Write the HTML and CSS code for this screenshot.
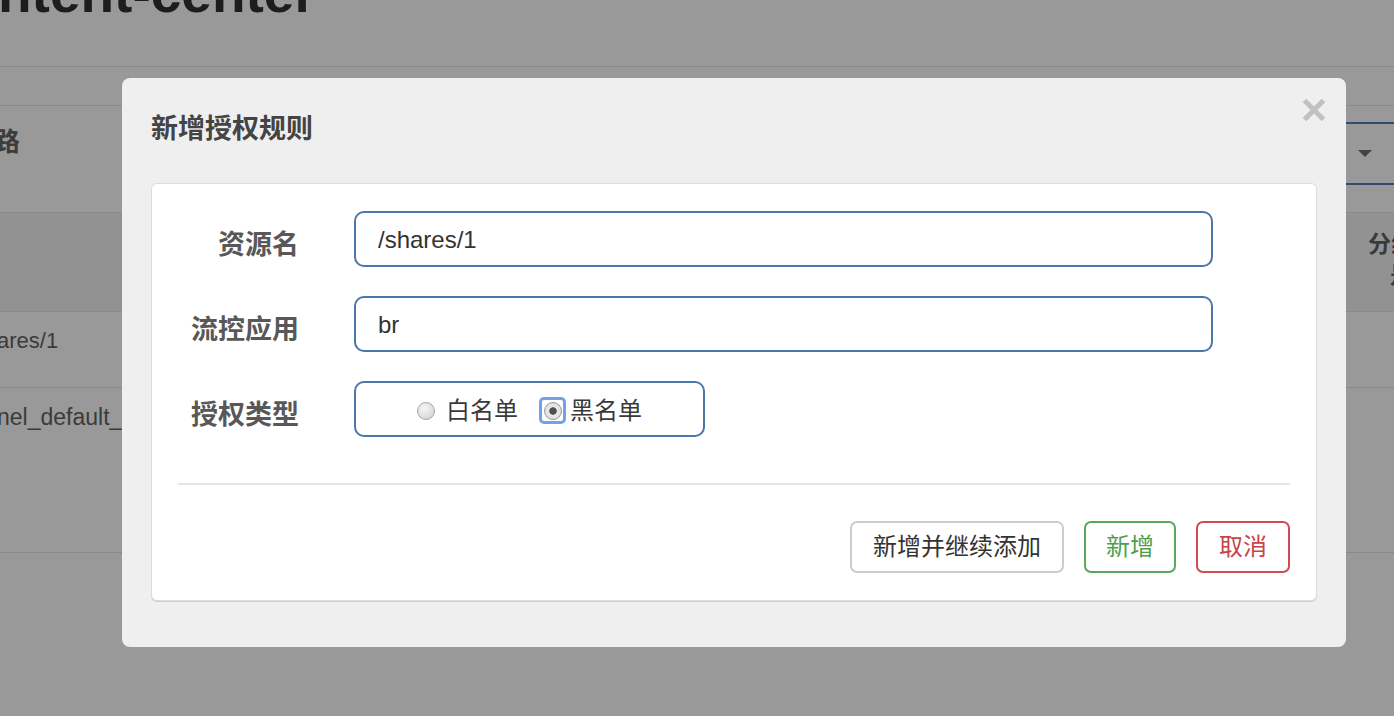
FILE: index.html
```html
<!DOCTYPE html>
<html lang="zh-CN">
<head>
<meta charset="utf-8">
<title>新增授权规则</title>
<link rel="stylesheet" href="styles.css">
</head>
<body>
<div class="page">
  <div class="page-title"><h1>ntent-center</h1></div>
  <div class="tabs"></div>
  <div class="filter">
    <div class="filter-label">路</div>
    <div class="select"><span class="caret"></span></div>
  </div>
  <div class="table">
    <div class="tr thead">
      <div class="th-cell"><div>分组</div><div class="l2">是否</div></div>
    </div>
    <div class="tr row1"><div class="td">ares/1</div></div>
    <div class="tr row2"><div class="td wide">nel_default_context</div></div>
  </div>
</div>

<div class="modal">
  <h4 class="modal-title">新增授权规则</h4>
  <span class="close-btn">
    <svg width="24" height="24" viewBox="0 0 24 24"><path d="M2.5 2.5 L21.5 21.5 M21.5 2.5 L2.5 21.5" stroke="#c1c1c1" stroke-width="5" stroke-linecap="butt" fill="none"/></svg>
  </span>
  <div class="panel">
    <div class="form-row">
      <label class="form-label">资源名</label>
      <input class="field" type="text" value="/shares/1">
    </div>
    <div class="form-row">
      <label class="form-label">流控应用</label>
      <input class="field" type="text" value="br">
    </div>
    <div class="form-row">
      <label class="form-label">授权类型</label>
      <div class="radio-box">
        <span class="radio"></span><span class="radio-text first">白名单</span>
        <span class="radio-focus"><span class="radio checked"></span></span><span class="radio-text second">黑名单</span>
      </div>
    </div>
    <div class="divider"></div>
    <div class="actions">
      <button class="btn btn-default">新增并继续添加</button>
      <button class="btn btn-success">新增</button>
      <button class="btn btn-danger">取消</button>
    </div>
  </div>
</div>
</body>
</html>
```

FILE: styles.css
```css
html, body {
  margin: 0;
  padding: 0;
  width: 1394px;
  height: 716px;
  overflow: hidden;
  background: #999999;
  font-family: "Liberation Sans", "Noto Sans CJK SC", sans-serif;
}

.page {
  width: 1394px;
  position: relative;
}

.page-title {
  height: 66px;
  overflow: hidden;
  border-bottom: 1px solid #888888;
}

.page-title h1 {
  margin: -34px 0 0 0;
  text-indent: -2px;
  font-size: 55px;
  line-height: 55px;
  font-weight: bold;
  letter-spacing: 0;
  color: #1d1d1d;
  white-space: nowrap;
}

.tabs {
  height: 38px;
  border-bottom: 1px solid #8b8b8b;
}

.filter {
  height: 106px;
  border-bottom: 1px solid #898989;
  display: flex;
  justify-content: space-between;
  align-items: flex-start;
}

.filter-label {
  margin-left: -6px;
  padding-top: 17px;
  font-size: 26px;
  line-height: 38px;
  font-weight: bold;
  color: #3c3c3c;
}

.select {
  flex: none;
  width: 200px;
  height: 63px;
  box-sizing: border-box;
  margin-top: 16px;
  margin-right: -40px;
  border-top: 2px solid #2f4d71;
  border-bottom: 2px solid #2f4d71;
  display: flex;
  justify-content: flex-end;
  align-items: center;
  padding-right: 62px;
}

.caret {
  width: 0;
  height: 0;
  border-left: 7px solid transparent;
  border-right: 7px solid transparent;
  border-top: 7px solid #444444;
}

.table .tr {
  display: flex;
  border-bottom: 1px solid #898989;
}

.thead {
  height: 98px;
  background: #929292;
  justify-content: flex-end;
}

.th-cell {
  width: 26px;
  padding-top: 16px;
  font-size: 23px;
  line-height: 31px;
  font-weight: bold;
  color: #3a3a3a;
  white-space: nowrap;
}

.th-cell .l2 {
  margin-left: 22px;
}

.row1 { height: 75px; }
.row2 { height: 164px; }

.td {
  margin-left: -3px;
  padding-top: 16px;
  font-size: 22px;
  line-height: 26px;
  color: #3b3b3b;
  white-space: nowrap;
}

.td.wide {
  font-size: 23px;
}

/* Modal */
.modal {
  position: absolute;
  left: 122px;
  top: 78px;
  width: 1224px;
  height: 569px;
  box-sizing: border-box;
  background: #efefef;
  border-radius: 8px;
  padding: 29px 29px 46px;
}

.modal-title {
  margin: 0;
  padding-top: 2px;
  font-size: 27px;
  line-height: 40px;
  font-weight: bold;
  color: #444444;
}

.close-btn {
  position: absolute;
  left: 1180px;
  top: 20px;
  width: 24px;
  height: 24px;
  display: block;
}

.close-btn svg { display: block; }

.panel {
  margin-top: 34px;
  background: #ffffff;
  border: 1px solid #dcdcdc;
  border-radius: 6px;
  box-shadow: 0 1px 0 #cfcfcf;
  padding: 27px 26px 27px 0;
}

.form-row {
  display: flex;
  align-items: flex-start;
  margin-bottom: 29px;
}

.form-row:last-of-type { margin-bottom: 0; }

.form-label {
  width: 147px;
  margin-right: 55px;
  flex: none;
  text-align: right;
  padding-top: 15px;
  font-size: 27px;
  line-height: 38px;
  font-weight: bold;
  color: #585858;
}

.field {
  width: 859px;
  height: 56px;
  box-sizing: border-box;
  border: 2px solid #4a77a9;
  border-radius: 10px;
  padding: 1px 22px 0;
  margin: 0;
  font-family: "Liberation Sans", "Noto Sans CJK SC", sans-serif;
  font-size: 24px;
  color: #333333;
  background: #ffffff;
  outline: none;
}

.radio-box {
  width: 351px;
  height: 56px;
  box-sizing: border-box;
  border: 2px solid #4a77a9;
  border-radius: 10px;
  display: flex;
  justify-content: center;
  align-items: center;
  padding: 3px 0 0 0;
}

.radio {
  flex: none;
  width: 18px;
  height: 18px;
  box-sizing: border-box;
  border-radius: 50%;
  border: 1px solid #a8a8a8;
  background: radial-gradient(circle at 40% 35%, #f6f6f6 0%, #dedede 60%, #cdcdcd 100%);
  position: relative;
}

.radio.checked {
  background: radial-gradient(circle at 50% 50%, #4f4f4f 0%, #4f4f4f 30%, #e9e9e9 36%, #d8d8d8 100%);
  border-color: #9a9a9a;
}

.radio-focus {
  flex: none;
  width: 27px;
  height: 27px;
  box-sizing: border-box;
  border: 3px solid #72a1ea;
  border-radius: 5px;
  display: flex;
  align-items: center;
  justify-content: center;
  background: #ffffff;
}

.radio-text {
  font-size: 24px;
  line-height: 32px;
  color: #3a3a3a;
}

.radio-text.first {
  margin-left: 11px;
  margin-right: 21px;
}

.radio-text.second {
  margin-left: 4px;
}

.divider {
  margin: 46px 0 0 26px;
  height: 2px;
  background: #e6e6e6;
}

.actions {
  margin-top: 36px;
  display: flex;
  justify-content: flex-end;
  gap: 20px;
}

.btn {
  height: 52px;
  box-sizing: border-box;
  padding: 0 20px;
  border: 2px solid #cccccc;
  border-radius: 7px;
  background: #ffffff;
  font-family: "Liberation Sans", "Noto Sans CJK SC", sans-serif;
  font-size: 24px;
  line-height: 1;
  color: #333333;
  cursor: pointer;
}

.btn-default {
  padding: 0 21px;
}

.btn-success {
  border-color: #5aa75a;
  color: #4f9e4f;
}

.btn-danger {
  border-color: #cd4d53;
  color: #c7434a;
  padding: 0 21px;
}
```
